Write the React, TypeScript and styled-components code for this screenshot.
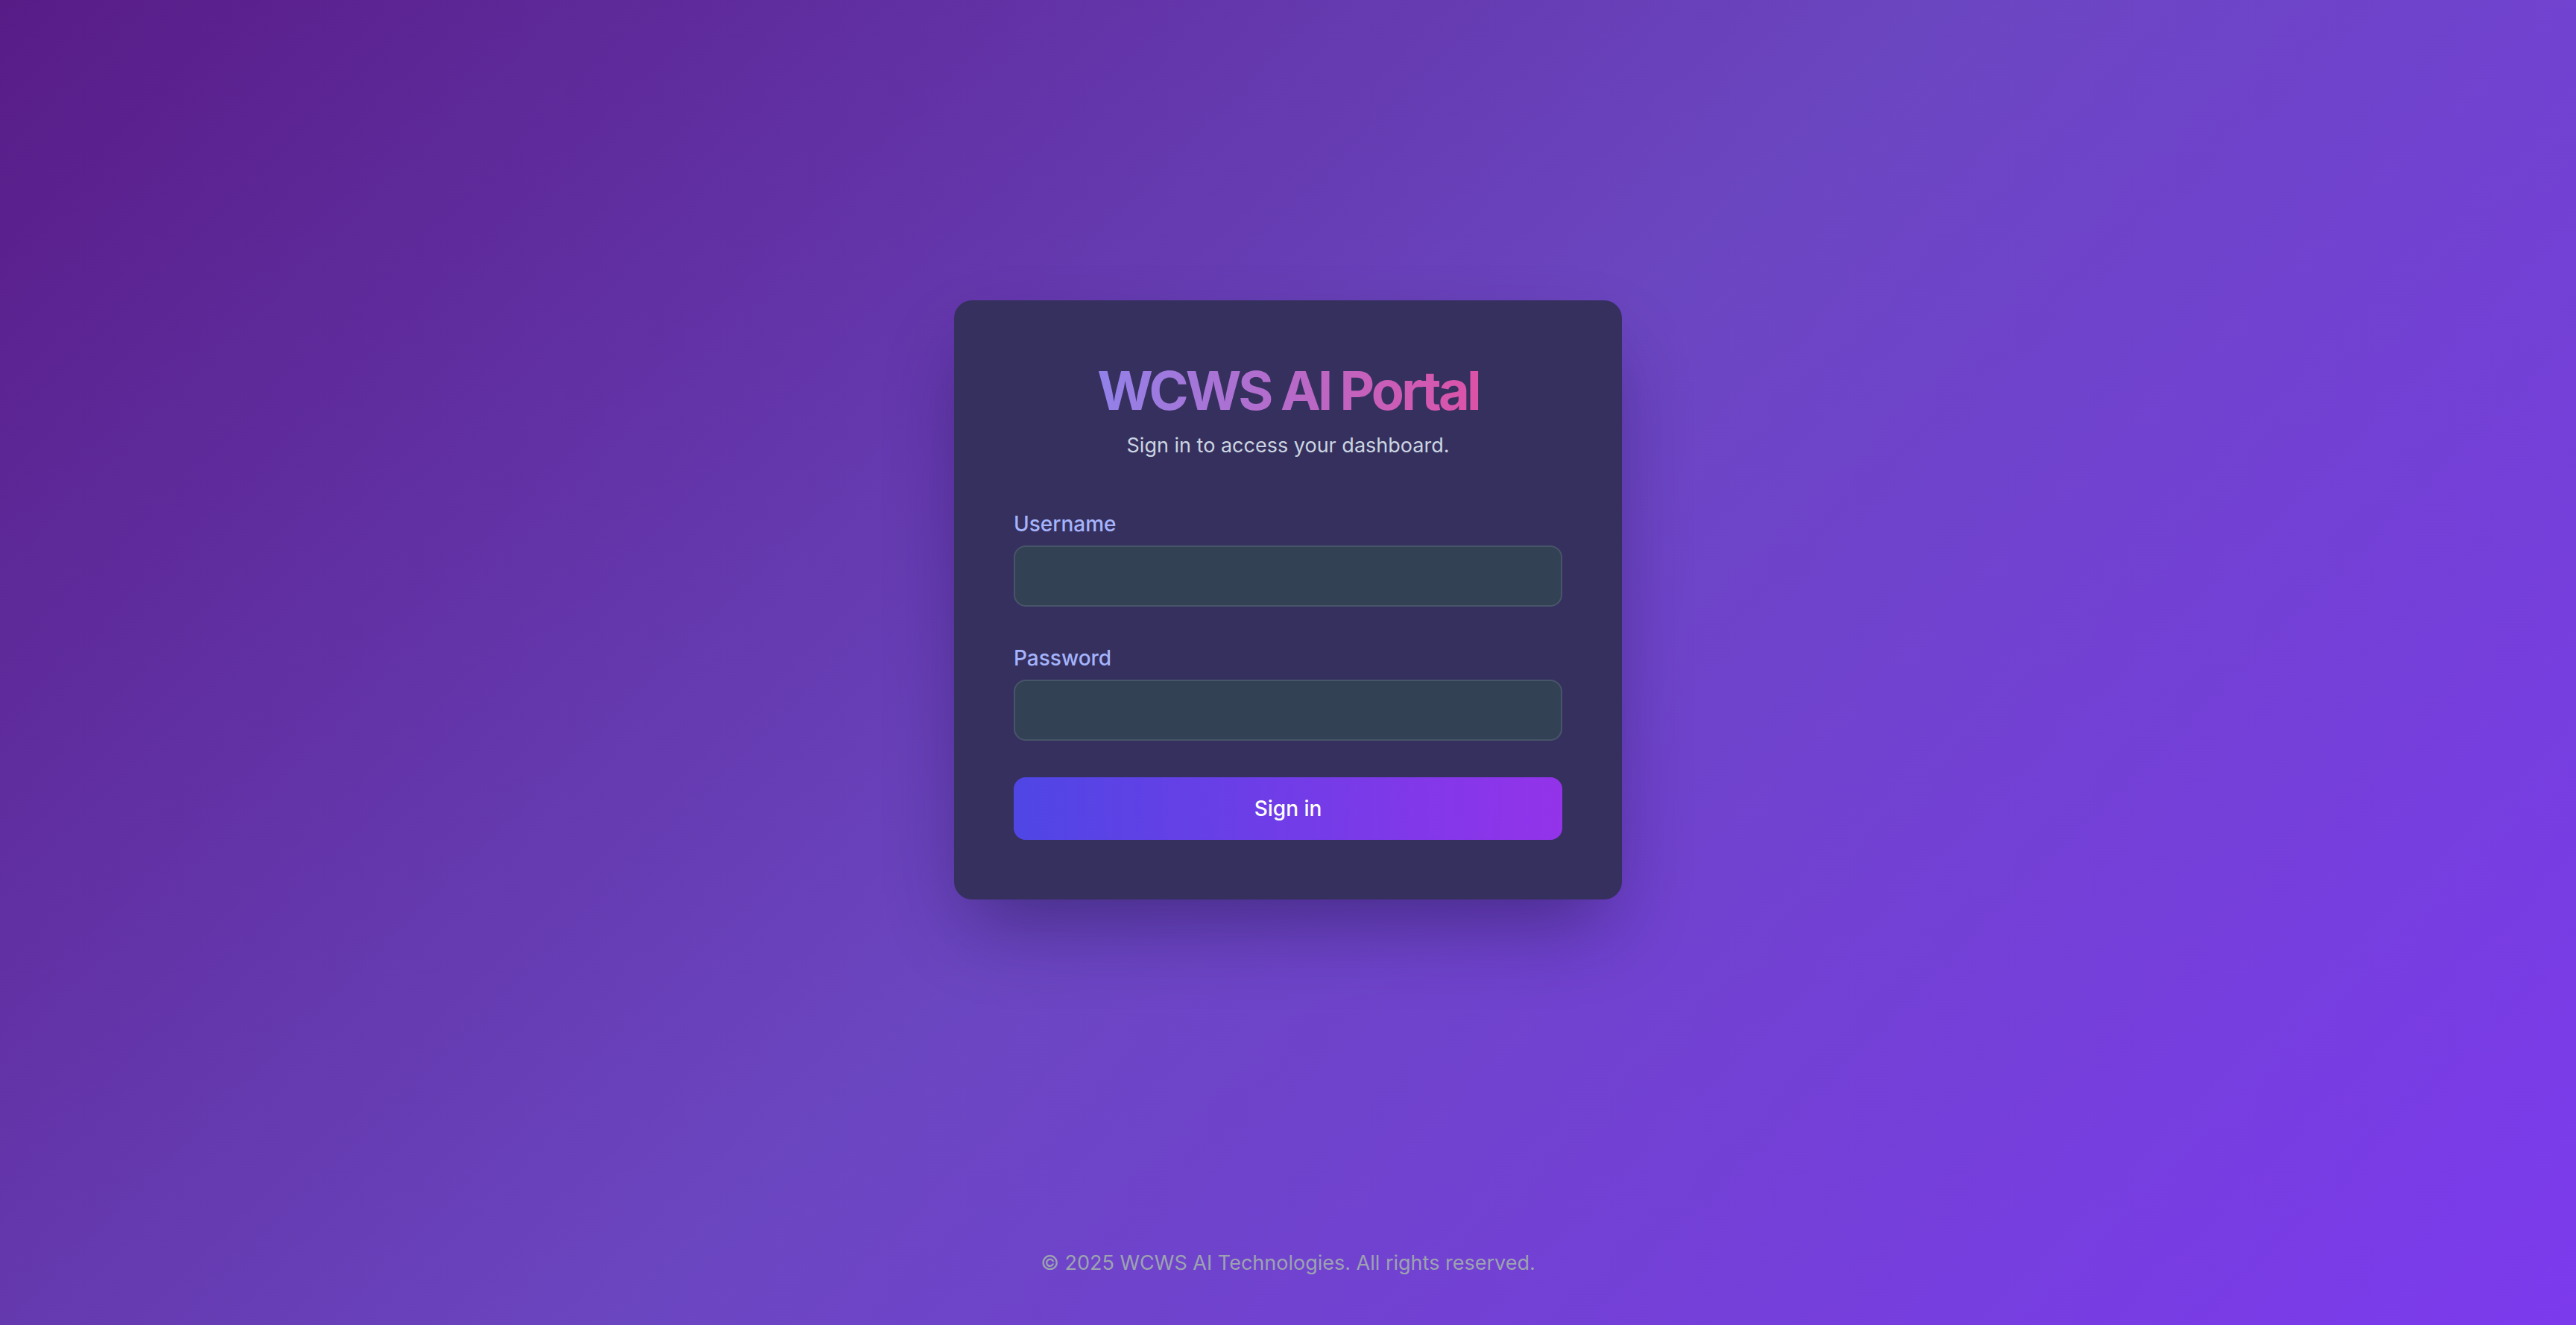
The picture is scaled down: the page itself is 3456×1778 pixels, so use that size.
import React from "react";
import styled, { createGlobalStyle } from "styled-components";

const GlobalStyle = createGlobalStyle`
  html, body {
    margin: 0;
    padding: 0;
  }
  body {
    font-family: Inter, "Noto Sans", "Liberation Sans", sans-serif;
    -webkit-font-smoothing: antialiased;
  }
  * { box-sizing: border-box; }
`;

const Page = styled.div`
  min-height: 100vh;
  display: flex;
  flex-direction: column;
  background: linear-gradient(135deg, #581c87 0%, #6b46c1 50%, #7c3aed 100%);
`;

const Main = styled.main`
  flex: 1;
  display: flex;
  align-items: center;
  justify-content: center;
`;

const Card = styled.div`
  width: 896px;
  padding: 81px 80px 80px;
  border-radius: 24px;
  background: rgb(54, 48, 94);
  box-shadow: 0 50px 100px -24px rgba(20, 10, 50, 0.45);
`;

const Title = styled.h1`
  margin: 0;
  font-size: 72px;
  line-height: 80px;
  font-weight: 700;
  letter-spacing: -3.8px;
  text-align: center;
  background: linear-gradient(to right, #818cf8, #ec4899);
  -webkit-background-clip: text;
  background-clip: text;
  color: transparent;
`;

const Subtitle = styled.p`
  margin: 14px 0 0;
  font-size: 27px;
  line-height: 40px;
  text-align: center;
  color: #cbd5e1;
`;

const Form = styled.form`
  margin-top: 65px;
  display: flex;
  flex-direction: column;
  gap: 49px;
`;

const Field = styled.div`
  display: flex;
  flex-direction: column;
  gap: 9px;
`;

const Label = styled.label`
  font-size: 28px;
  line-height: 40px;
  font-weight: 500;
  color: #a5b4fc;
`;

const Input = styled.input`
  height: 82px;
  width: 100%;
  border: 2px solid #475569;
  border-radius: 16px;
  background: #334155;
  color: #f1f5f9;
  font-family: inherit;
  font-size: 28px;
  padding: 0 24px;
  outline: none;
`;

const Button = styled.button`
  height: 84px;
  width: 100%;
  border: none;
  border-radius: 16px;
  background: linear-gradient(to right, #4f46e5, #9333ea);
  color: #ffffff;
  font-family: inherit;
  font-size: 28px;
  font-weight: 500;
  cursor: pointer;
`;

const Footer = styled.footer`
  height: 168px;
  display: flex;
  align-items: center;
  justify-content: center;
  font-size: 27px;
  color: #9ca3af;
`;

export default function App() {
  return (
    <>
      <GlobalStyle />
      <Page>
        <Main>
          <Card>
            <Title>WCWS AI Portal</Title>
            <Subtitle>Sign in to access your dashboard.</Subtitle>
            <Form onSubmit={(e) => e.preventDefault()}>
              <Field>
                <Label htmlFor="username">Username</Label>
                <Input id="username" type="text" />
              </Field>
              <Field>
                <Label htmlFor="password">Password</Label>
                <Input id="password" type="password" />
              </Field>
              <Button type="submit">Sign in</Button>
            </Form>
          </Card>
        </Main>
        <Footer>© 2025 WCWS AI Technologies. All rights reserved.</Footer>
      </Page>
    </>
  );
}
